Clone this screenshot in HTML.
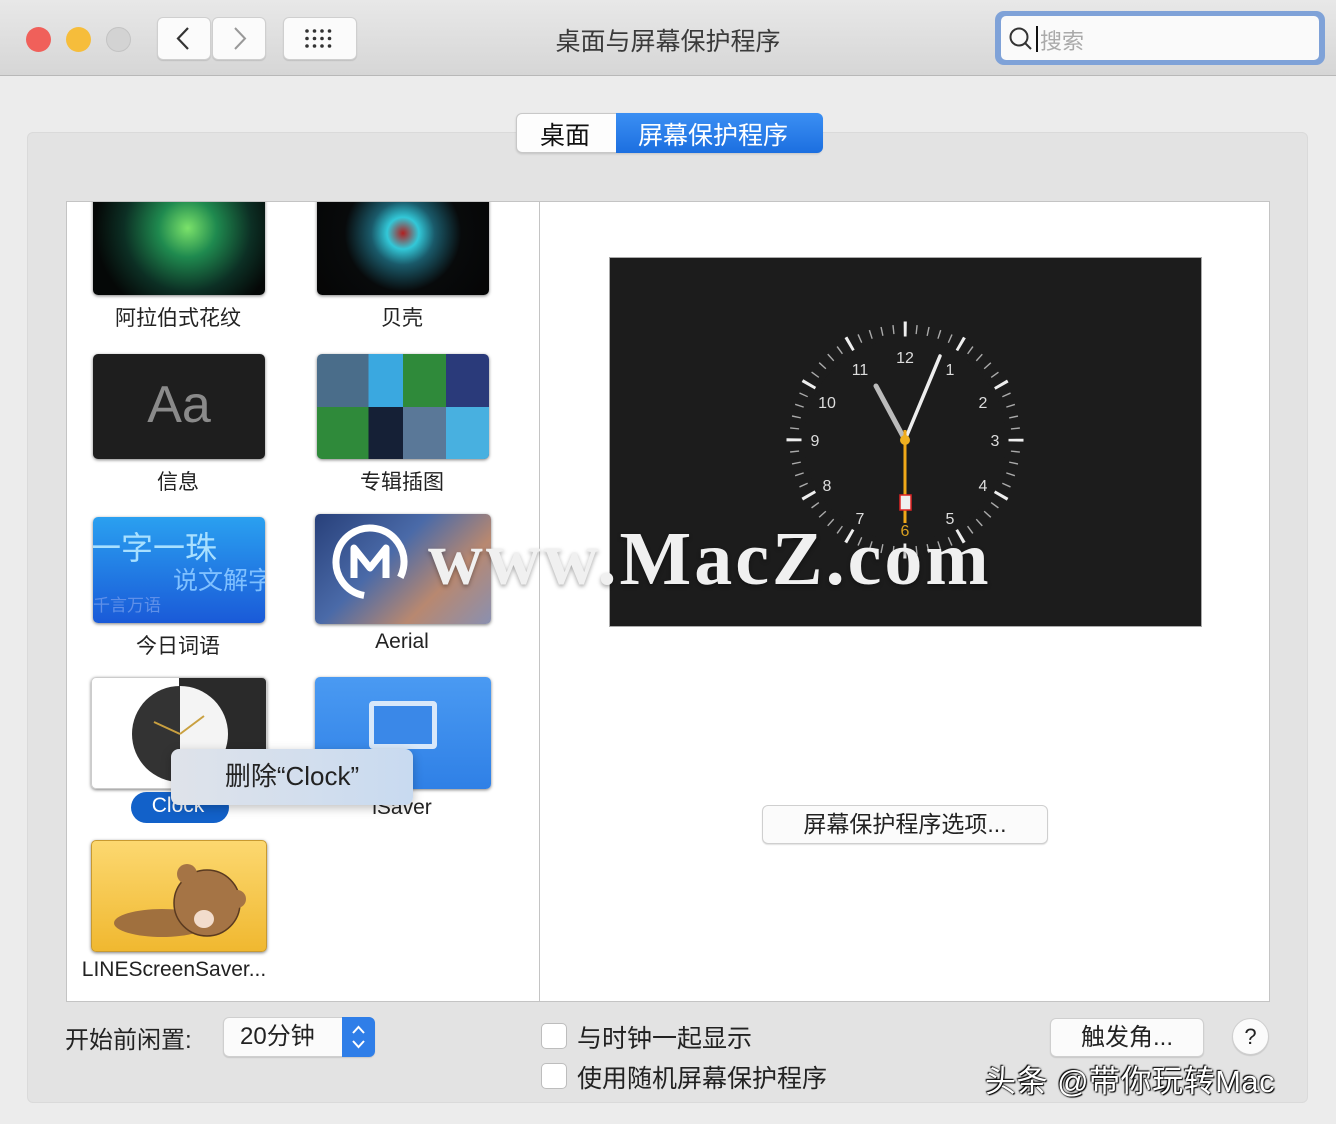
<!DOCTYPE html>
<html><head><meta charset="utf-8">
<style>
*{box-sizing:border-box;margin:0;padding:0}
body{width:1336px;height:1124px;overflow:hidden;background:#ececec;font-family:"Liberation Sans","Noto Sans CJK SC",sans-serif;color:#222;position:relative}
.a{position:absolute;white-space:nowrap}
.title{left:0;top:0;width:1336px;height:76px;background:linear-gradient(#e8e8e8,#d6d6d6);border-bottom:1px solid #b8b8b8}
.btn{background:#fbfbfb;border:1px solid #cfcfcf;border-radius:6px;box-shadow:0 1px 1px rgba(0,0,0,.12)}
.lbl{font-size:21px;color:#222;text-align:center;width:230px}
.th{border-radius:5px;overflow:hidden;box-shadow:0 1px 3px rgba(0,0,0,.5)}
.cb{width:26px;height:26px;background:#fff;border:1px solid #bdbdbd;border-radius:5px}
</style></head><body>
<div class="a title"></div>
<div class="a" style="left:26px;top:27px;width:25px;height:25px;border-radius:50%;background:#f0605a"></div>
<div class="a" style="left:66px;top:27px;width:25px;height:25px;border-radius:50%;background:#f6bd3b"></div>
<div class="a" style="left:106px;top:27px;width:25px;height:25px;border-radius:50%;background:#d3d3d3;border:1px solid #c3c3c3"></div>
<div class="a btn" style="left:157px;top:17px;width:54px;height:43px"></div>
<div class="a btn" style="left:212px;top:17px;width:54px;height:43px"></div>
<svg class="a" style="left:157px;top:17px" width="110" height="43"><path d="M31 11 L21 21.5 L31 32" fill="none" stroke="#333" stroke-width="2.2"/><path d="M78 11 L88 21.5 L78 32" fill="none" stroke="#999" stroke-width="2"/></svg>
<div class="a btn" style="left:283px;top:17px;width:74px;height:43px"></div>
<svg class="a" style="left:305px;top:29px" width="32" height="20" fill="#333"><g><circle cx="2" cy="2" r="1.8"/><circle cx="9.5" cy="2" r="1.8"/><circle cx="17" cy="2" r="1.8"/><circle cx="24.5" cy="2" r="1.8"/><circle cx="2" cy="9.5" r="1.8"/><circle cx="9.5" cy="9.5" r="1.8"/><circle cx="17" cy="9.5" r="1.8"/><circle cx="24.5" cy="9.5" r="1.8"/><circle cx="2" cy="17" r="1.8"/><circle cx="9.5" cy="17" r="1.8"/><circle cx="17" cy="17" r="1.8"/><circle cx="24.5" cy="17" r="1.8"/></g></svg>
<div class="a" style="left:468px;top:22px;width:400px;text-align:center;font-size:25px;color:#3a3a3a">桌面与屏幕保护程序</div>
<div class="a" style="left:995px;top:11px;width:330px;height:54px;border-radius:9px;background:#7fa2d8"></div>
<div class="a" style="left:1001px;top:16px;width:318px;height:44px;border-radius:5px;background:#fafafa"></div>
<svg class="a" style="left:1008px;top:26px" width="30" height="26"><circle cx="11" cy="11" r="8.5" fill="none" stroke="#333" stroke-width="2"/><path d="M17 17 L23 23" stroke="#333" stroke-width="2"/><path d="M29 0 V26" stroke="#111" stroke-width="2"/></svg>
<div class="a" style="left:1040px;top:24px;font-size:22px;color:#aaa">搜索</div>

<div class="a" style="left:27px;top:132px;width:1281px;height:971px;background:#e3e3e3;border-radius:6px;border:1px solid #dadada"></div>
<div class="a" style="left:516px;top:113px;width:306px;height:40px;border-radius:6px;background:#fdfdfd;border:1px solid #c8c8c8;box-shadow:0 1px 2px rgba(0,0,0,.15)"></div>
<div class="a" style="left:616px;top:113px;width:207px;height:40px;border-radius:0 6px 6px 0;background:linear-gradient(#3b8ff3,#1c6fe0)"></div>
<div class="a" style="left:540px;top:116px;font-size:25px;color:#111">桌面</div>
<div class="a" style="left:638px;top:116px;font-size:25px;color:#fff">屏幕保护程序</div>

<div class="a" style="left:66px;top:201px;width:474px;height:801px;background:#fff;border:1px solid #c4c4c4;overflow:hidden">
 <div class="a th" style="left:26px;top:-10px;width:172px;height:103px;background:radial-gradient(circle at 55% 35%,#7be26a 0,#1f8a4f 25%,#0c2f24 55%,#050807 80%)"></div>
 <div class="a th" style="left:250px;top:-10px;width:172px;height:103px;background:radial-gradient(circle at 50% 40%,#b02020 0,#32c8d8 15%,#1a5a6a 30%,#080a0b 55%,#050505)"></div>
 <div class="a lbl" style="left:-4px;top:100px">阿拉伯式花纹</div>
 <div class="a lbl" style="left:220px;top:100px">贝壳</div>
 <div class="a th" style="left:26px;top:152px;width:172px;height:105px;background:#1e1e1e;color:#8a8a8a;font-size:52px;text-align:center;line-height:103px">Aa</div>
 <div class="a th" style="left:250px;top:152px;width:172px;height:105px;background:linear-gradient(90deg,#4a6d8a 0 30%,#3aa8e0 30% 50%,#2f8a3a 50% 75%,#2a3a7a 75%);"><div style="height:50%"></div><div style="height:50%;background:linear-gradient(90deg,#2f8a3a 0 30%,#152036 30% 50%,#5a7898 50% 75%,#48b0e0 75%)"></div></div>
 <div class="a lbl" style="left:-4px;top:264px">信息</div>
 <div class="a lbl" style="left:220px;top:264px">专辑插图</div>
 <div class="a th" style="left:26px;top:315px;width:172px;height:106px;background:linear-gradient(#2aa0f0,#1a5ad8);color:#a8e0ff;overflow:hidden"><div style="position:absolute;left:-4px;top:6px;font-size:32px;white-space:nowrap">一字一珠</div><div style="position:absolute;left:80px;top:44px;font-size:25px;color:#7fc0ff;white-space:nowrap">说文解字</div><div style="position:absolute;left:0;top:74px;font-size:17px;color:#5f90e8;white-space:nowrap">千言万语</div></div>
 <div class="a th" style="left:248px;top:312px;width:176px;height:110px;background:linear-gradient(135deg,#28407a 0,#4a6aa8 40%,#b88870 70%,#8a90b0)"></div>
 <div class="a lbl" style="left:-4px;top:428px">今日词语</div>
 <div class="a lbl" style="left:220px;top:428px">Aerial</div>
 <div class="a th" style="left:24px;top:475px;width:176px;height:112px;background:linear-gradient(90deg,#fff 0 50%,#2a2a2a 50%);border:1px solid #ccc"><svg width="176" height="112"><defs><clipPath id="l"><rect width="88" height="112"/></clipPath></defs><circle cx="88" cy="56" r="48" fill="#f4f4f4"/><circle cx="88" cy="56" r="48" fill="#333" clip-path="url(#l)"/><path d="M88 56 L62 44 M88 56 L112 38" stroke="#c9a040" stroke-width="2"/></svg></div>
 <div class="a th" style="left:248px;top:475px;width:176px;height:112px;background:linear-gradient(#4a9af2,#2f80e6)"><div style="position:absolute;left:54px;top:24px;width:68px;height:48px;border:5px solid #d8e8fa;border-radius:4px;background:#3a88e8"></div></div>
 <div class="a" style="left:64px;top:590px;width:98px;height:31px;border-radius:16px;background:#1261c9"></div>
 <div class="a lbl" style="left:-4px;top:592px;color:#fff">Clock</div>
 <div class="a lbl" style="left:220px;top:594px">iSaver</div>
 <div class="a" style="left:104px;top:547px;width:242px;height:56px;border-radius:8px;background:linear-gradient(90deg,#dfe3ea,#c8daf0);box-shadow:0 3px 10px rgba(0,0,0,.25);font-size:26px;text-align:center;line-height:54px;color:#222">删除“Clock”</div>
 <div class="a th" style="left:24px;top:638px;width:176px;height:112px;background:linear-gradient(#fcd870,#f0b830);border:1px solid #c89a30"><svg width="176" height="112"><ellipse cx="70" cy="82" rx="48" ry="14" fill="#a0703e"/><circle cx="115" cy="62" r="33" fill="#a57445" stroke="#5a3a20" stroke-width="1.5"/><circle cx="95" cy="33" r="10" fill="#a57445"/><circle cx="145" cy="58" r="9" fill="#a57445"/><ellipse cx="112" cy="78" rx="10" ry="9" fill="#f2dccc"/></svg></div>
 <div class="a lbl" style="left:-8px;top:756px;width:230px">LINEScreenSaver...</div>
</div>
<div class="a" style="left:539px;top:201px;width:731px;height:801px;background:#fff;border:1px solid #c4c4c4"></div>
<div class="a" style="left:609px;top:257px;width:593px;height:370px;background:#1c1c1c;border:1px solid #aaa"></div>
<svg class="a" style="left:610px;top:258px" width="591" height="368" font-family="Liberation Sans" font-size="16" fill="#ddd" text-anchor="middle">
 <g transform="translate(295,182)">
  <circle r="111" fill="none" stroke="#aaa" stroke-width="9" stroke-dasharray="1.4 10.22" stroke-dashoffset="0.7"/>
  <circle r="111" fill="none" stroke="#eee" stroke-width="15" stroke-dasharray="3 55.12" stroke-dashoffset="1.5"/>
  <circle r="101" fill="#1c1c1c"/>
 </g>
 <g transform="translate(295,188)">
  <text x="0" y="-83">12</text><text x="45" y="-71">1</text><text x="78" y="-38">2</text><text x="90" y="0">3</text><text x="78" y="45">4</text><text x="45" y="78">5</text><text x="0" y="90" fill="#d9a020">6</text><text x="-45" y="78">7</text><text x="-78" y="45">8</text><text x="-90" y="0">9</text><text x="-78" y="-38">10</text><text x="-45" y="-71">11</text>
 </g>
 <path d="M295 182 L266 128" stroke="#bbb" stroke-width="5" stroke-linecap="round"/>
 <path d="M295 182 L330 98" stroke="#eee" stroke-width="3.5" stroke-linecap="round"/>
 <path d="M295 172 L295 265" stroke="#f0a818" stroke-width="3"/>
 <rect x="290" y="237" width="11" height="15" fill="#eee" stroke="#d22" stroke-width="1.5"/>
 <circle cx="295" cy="182" r="5" fill="#f0b020"/>
</svg>
<svg class="a" style="left:330px;top:522px" width="84" height="84"><circle cx="40" cy="40" r="34" fill="none" stroke="#fff" stroke-width="7" stroke-dasharray="170 44" transform="rotate(100 40 40)"/><path d="M24 56 V26 L40 46 L56 26 V56" fill="none" stroke="#fff" stroke-width="7" stroke-linejoin="round"/></svg>
<div class="a" style="left:428px;top:516px;font-family:'Liberation Serif',serif;font-weight:bold;font-size:76px;color:#f0f0f0;text-shadow:0 2px 4px rgba(0,0,0,.35);letter-spacing:3px">www.MacZ.com</div>
<div class="a btn" style="left:762px;top:805px;width:286px;height:39px;font-size:23px;text-align:center;line-height:37px;color:#222">屏幕保护程序选项...</div>

<div class="a" style="left:65px;top:1020px;font-size:24px;color:#222">开始前闲置:</div>
<div class="a btn" style="left:223px;top:1017px;width:152px;height:40px;font-size:24px;line-height:38px;padding-left:16px">20分钟</div>
<div class="a" style="left:342px;top:1017px;width:33px;height:40px;border-radius:0 6px 6px 0;background:#2f7ee8"></div>
<svg class="a" style="left:342px;top:1017px" width="33" height="40"><path d="M11 16 L16.5 10 L22 16 M11 24 L16.5 30 L22 24" fill="none" stroke="#fff" stroke-width="2"/></svg>
<div class="a cb" style="left:541px;top:1023px"></div>
<div class="a cb" style="left:541px;top:1063px"></div>
<div class="a" style="left:577px;top:1019px;font-size:25px">与时钟一起显示</div>
<div class="a" style="left:577px;top:1059px;font-size:25px">使用随机屏幕保护程序</div>
<div class="a btn" style="left:1050px;top:1018px;width:154px;height:39px;font-size:24px;text-align:center;line-height:37px">触发角...</div>
<div class="a btn" style="left:1232px;top:1018px;width:37px;height:37px;border-radius:50%;font-size:22px;text-align:center;line-height:35px">?</div>
<div class="a" style="left:985px;top:1056px;font-size:31px;color:#fff;letter-spacing:0.5px;text-shadow:0 0 2px #000,1px 1px 1px #000,-1px -1px 1px #000">头条 @带你玩转Mac</div>
</body></html>
